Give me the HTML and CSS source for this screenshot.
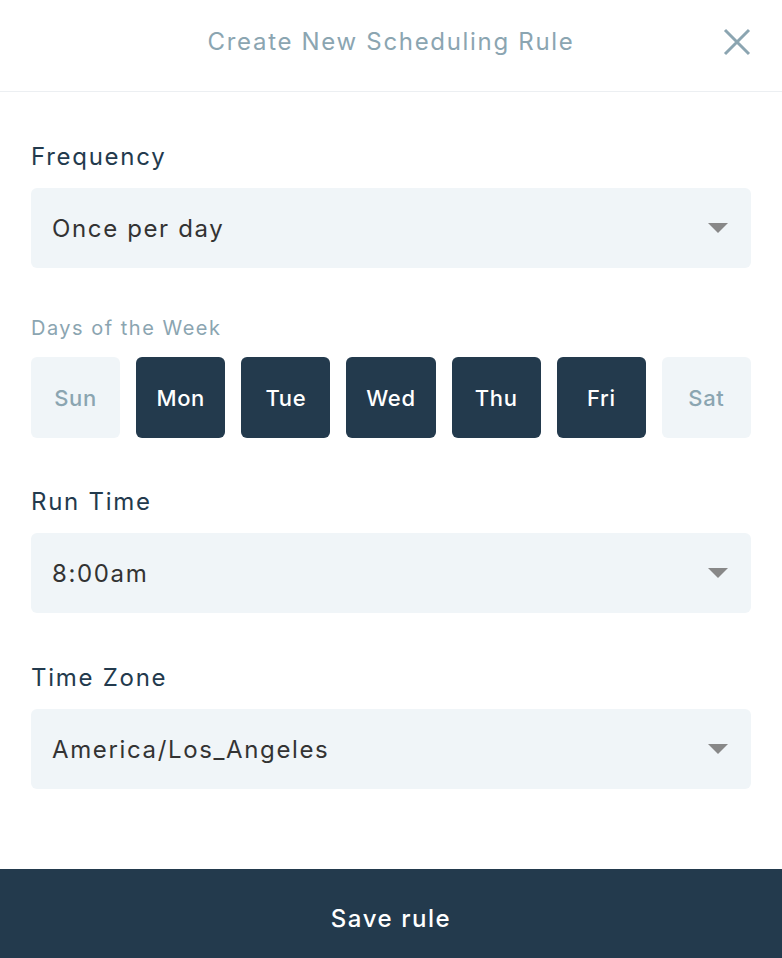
FILE: index.html
```html
<!DOCTYPE html>
<html>
<head>
<meta charset="utf-8">
<link rel="stylesheet" href="styles.css">
</head>
<body>
<div class="page">
  <header class="header">
    <h1 class="title">Create New Scheduling Rule</h1>
    <button class="close" aria-label="Close">
      <svg width="28" height="28" viewBox="0 0 28 28"><path d="M2 2 L26 26 M26 2 L2 26" stroke="#8ba5b1" stroke-width="3" stroke-linecap="butt"/></svg>
    </button>
  </header>
  <main class="content">
    <div class="field">
      <label class="label">Frequency</label>
      <div class="select"><span>Once per day</span><i class="caret"></i></div>
    </div>
    <div class="field days-field">
      <label class="label small">Days of the Week</label>
      <div class="days">
        <button class="day">Sun</button>
        <button class="day on">Mon</button>
        <button class="day on">Tue</button>
        <button class="day on">Wed</button>
        <button class="day on">Thu</button>
        <button class="day on">Fri</button>
        <button class="day">Sat</button>
      </div>
    </div>
    <div class="field">
      <label class="label">Run Time</label>
      <div class="select"><span>8:00am</span><i class="caret"></i></div>
    </div>
    <div class="field last">
      <label class="label">Time Zone</label>
      <div class="select"><span>America/Los_Angeles</span><i class="caret"></i></div>
    </div>
  </main>
  <button class="save">Save rule</button>
</div>
</body>
</html>
```
FILE: styles.css
```css
* { box-sizing: border-box; }
html, body { margin: 0; padding: 0; }
body { font-family: Inter, "Noto Sans", sans-serif; background: #fff; }
.page { height: 958px; display: flex; flex-direction: column; }
.header {
  height: 92px;
  border-bottom: 1px solid #eceff2;
  display: flex; align-items: center; justify-content: center;
  position: relative;
  padding-bottom: 8px;
}
.title { margin: 0; font-size: 24px; font-weight: 400; color: #8ba5b1; letter-spacing: 0.07em; }
.close {
  position: absolute; right: 31px; top: 28px;
  width: 28px; height: 28px; padding: 0; border: 0; background: none;
  display: flex;
}
.content { padding: 49px 31px 0; display: flex; flex-direction: column; gap: 48px; }
.field { display: flex; flex-direction: column; gap: 15px; }
.field.last { margin-top: 1px; }
.days-field { gap: 16px; }
.label { font-size: 24px; line-height: 32px; color: #233a4d; letter-spacing: 0.072em; }
.label.small { font-size: 20px; line-height: 25px; color: #8ba5b1; letter-spacing: 0.075em; }
.select {
  height: 80px; border-radius: 6px; background: #f0f5f8;
  display: flex; align-items: center; justify-content: space-between;
  padding: 0 23px 0 21px;
  font-size: 24px; color: #333; letter-spacing: 0.068em;
}
.caret {
  width: 0; height: 0;
  border-left: 10px solid transparent; border-right: 10px solid transparent;
  border-top: 10px solid #888;
}
.days { display: flex; gap: 16px; }
.day {
  flex: 1; height: 81px; border: 0; border-radius: 6px;
  background: #f0f5f8; color: #8ba5b1;
  font-family: inherit; font-size: 22px; font-weight: 500;
  letter-spacing: 0.03em;
  padding: 0;
}
.day.on { background: #233a4d; color: #fff; }
.save {
  margin-top: auto; height: 89px; border: 0; width: 100%;
  background: #233a4d; color: #fff;
  font-family: inherit; font-size: 24px; font-weight: 500;
  letter-spacing: 0.065em;
  padding: 10px 0 0;
}
```
